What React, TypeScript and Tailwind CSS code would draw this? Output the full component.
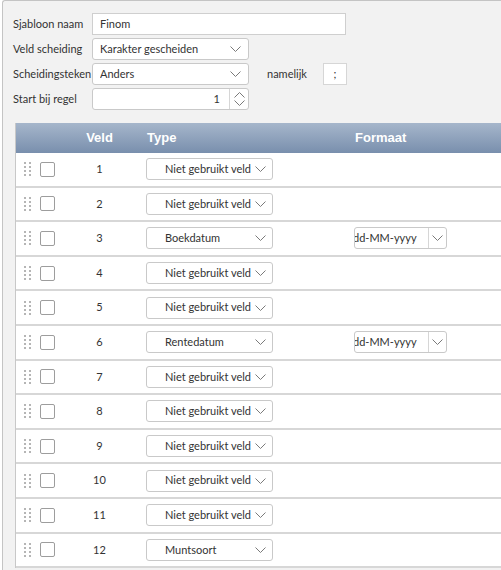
import React from 'react'

const rows: { nr: number; type: string; formaat?: boolean }[] = [
  { nr: 1, type: 'Niet gebruikt veld' },
  { nr: 2, type: 'Niet gebruikt veld' },
  { nr: 3, type: 'Boekdatum', formaat: true },
  { nr: 4, type: 'Niet gebruikt veld' },
  { nr: 5, type: 'Niet gebruikt veld' },
  { nr: 6, type: 'Rentedatum', formaat: true },
  { nr: 7, type: 'Niet gebruikt veld' },
  { nr: 8, type: 'Niet gebruikt veld' },
  { nr: 9, type: 'Niet gebruikt veld' },
  { nr: 10, type: 'Niet gebruikt veld' },
  { nr: 11, type: 'Niet gebruikt veld' },
  { nr: 12, type: 'Muntsoort' }
]

function Chevron({ up = false }: { up?: boolean }) {
  return (
    <svg width="11" height="6" viewBox="0 0 11 6" className="shrink-0">
      <path
        d={up ? 'M0.5 5.5 L5.5 0.5 L10.5 5.5' : 'M0.5 0.5 L5.5 5.5 L10.5 0.5'}
        fill="none"
        stroke="#7a7a7a"
        strokeWidth="1"
      />
    </svg>
  )
}

function Select({ value, className }: { value: string; className: string }) {
  return (
    <div
      className={`flex items-center h-[22px] bg-white border border-[#c9c9c9] rounded-[3px] ${className}`}
    >
      <span className="flex-1 whitespace-nowrap overflow-hidden">{value}</span>
      <Chevron />
    </div>
  )
}

function Handle() {
  return (
    <div className="grid grid-cols-2 gap-x-[3px] gap-y-[2px] w-[7px]">
      {Array.from({ length: 8 }).map((_, i) => (
        <span key={i} className="block w-[2px] h-[2px] bg-[#b5b5b5]" />
      ))}
    </div>
  )
}

export default function App() {
  return (
    <div
      className="h-[570px] bg-white pl-[2px] text-[11px] text-[#333] overflow-hidden"
      style={{ fontFamily: 'Lato, "Noto Sans", sans-serif' }}
    >
      <div className="h-[570px] bg-[#f2f2f2] border-l border-t border-[#c4c4c4] rounded-tl-[3px] overflow-hidden">
        {/* formulier */}
        <div className="pt-[12px] pl-[10px] flex flex-col gap-[3px]">
          <div className="flex items-center">
            <label className="w-[79px] whitespace-nowrap">Sjabloon naam</label>
            <div className="w-[254px] h-[22px] bg-white border border-[#cfcfcf] flex items-center pl-[7px]">
              Finom
            </div>
          </div>
          <div className="flex items-center">
            <label className="w-[79px] whitespace-nowrap">Veld scheiding</label>
            <Select
              value="Karakter gescheiden"
              className="w-[157px] pl-[7px] pr-[7px]"
            />
          </div>
          <div className="flex items-center">
            <label className="w-[79px] whitespace-nowrap">Scheidingsteken</label>
            <Select value="Anders" className="w-[157px] pl-[7px] pr-[7px]" />
            <span className="ml-[18px] w-[56px]">namelijk</span>
            <div className="w-[24px] h-[22px] bg-white border border-[#d6d6d6] flex items-center justify-center">
              ;
            </div>
          </div>
          <div className="flex items-center">
            <label className="w-[79px] whitespace-nowrap">Start bij regel</label>
            <div className="w-[157px] h-[22px] bg-white border border-[#c9c9c9] rounded-[3px] flex">
              <span className="flex-1 text-right pr-[9px] leading-[20px]">1</span>
              <div className="w-[19px] border-l border-[#d6d6d6] flex flex-col items-center justify-center gap-[2px]">
                <Chevron up />
                <Chevron />
              </div>
            </div>
          </div>
        </div>

        {/* tabel */}
        <div className="ml-[12px] mt-[13px] w-[600px] border-l border-[#c8c8c8] bg-white">
          <div
            className="h-[30px] flex items-center text-white font-bold text-[13px] bg-gradient-to-b from-[#a6b6cb] to-[#798fad]"
            style={{ fontFamily: '"Liberation Sans", Arial, sans-serif' }}
          >
            <div className="w-[44px]" />
            <div className="w-[79px] text-center">Veld</div>
            <div className="w-[215px] pl-[8px]">Type</div>
            <div className="pl-[1px]">Formaat</div>
          </div>
          {rows.map((r) => (
            <div
              key={r.nr}
              className="h-[34.6px] flex items-center border-b-2 border-[#d7d7d7] box-border"
            >
              <div className="w-[44px] flex items-center pl-[8px] gap-[9px]">
                <Handle />
                <span className="block w-[15px] h-[15px] border border-[#9d9d9d] rounded-[2px] bg-white" />
              </div>
              <div className="w-[79px] text-center">{r.nr}</div>
              <div className="w-[215px] pl-[7px]">
                <Select value={r.type} className="w-[127px] pl-[18px] pr-[6px]" />
              </div>
              {r.formaat && (
                <div className="w-[93px] h-[22px] bg-white border border-[#c9c9c9] rounded-[3px] flex">
                  <div className="w-[73px] overflow-hidden flex items-center">
                    <span className="whitespace-nowrap -ml-[2px]">dd-MM-yyyy</span>
                  </div>
                  <div className="flex-1 border-l border-[#d6d6d6] flex items-center justify-center">
                    <Chevron />
                  </div>
                </div>
              )}
            </div>
          ))}
        </div>
      </div>
    </div>
  )
}
